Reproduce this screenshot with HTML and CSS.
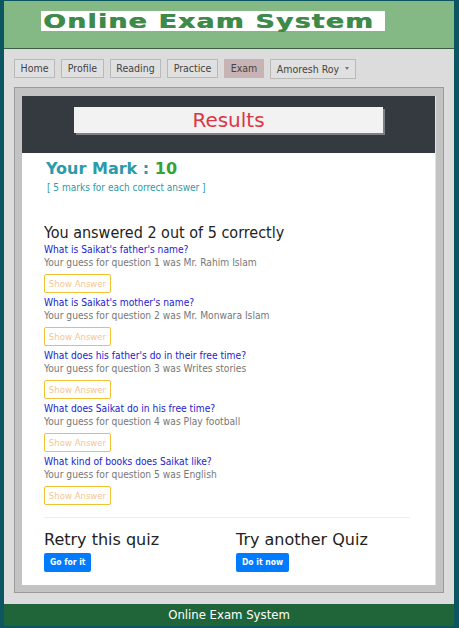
FILE: index.html
```html
<!DOCTYPE html>
<html>
<head>
<meta charset="utf-8">
<link rel="stylesheet" href="styles.css">
</head>
<body>
<div class="page">
  <header class="site-header">
    <div class="logo"><span class="logo-text">Online Exam System</span></div>
  </header>
  <div class="body-area">
    <nav class="nav">
      <span class="nav-btn">Home</span>
      <span class="nav-btn">Profile</span>
      <span class="nav-btn">Reading</span>
      <span class="nav-btn">Practice</span>
      <span class="nav-btn active">Exam</span>
      <span class="nav-btn user">Amoresh Roy <span class="caret"></span></span>
    </nav>
    <div class="panel">
      <div class="panel-inner">
        <div class="results-bar">
          <div class="results-box">Results</div>
        </div>
        <div class="content">
          <div class="mark">Your Mark : <span class="mark-num">10</span></div>
          <div class="mark-note">[ 5 marks for each correct answer ]</div>
          <h2 class="summary">You answered 2 out of 5 correctly</h2>
          <div class="q">
            <div class="q-title">What is Saikat's father's name?</div>
            <div class="q-guess">Your guess for question 1 was Mr. Rahim Islam</div>
            <span class="show-btn">Show Answer</span>
          </div>
          <div class="q">
            <div class="q-title">What is Saikat's mother's name?</div>
            <div class="q-guess">Your guess for question 2 was Mr. Monwara Islam</div>
            <span class="show-btn">Show Answer</span>
          </div>
          <div class="q">
            <div class="q-title">What does his father's do in their free time?</div>
            <div class="q-guess">Your guess for question 3 was Writes stories</div>
            <span class="show-btn">Show Answer</span>
          </div>
          <div class="q">
            <div class="q-title">What does Saikat do in his free time?</div>
            <div class="q-guess">Your guess for question 4 was Play football</div>
            <span class="show-btn">Show Answer</span>
          </div>
          <div class="q">
            <div class="q-title">What kind of books does Saikat like?</div>
            <div class="q-guess">Your guess for question 5 was English</div>
            <span class="show-btn">Show Answer</span>
          </div>
          <hr class="divider">
          <div class="actions">
            <div class="action">
              <div class="action-title">Retry this quiz</div>
              <span class="blue-btn">Go for it</span>
            </div>
            <div class="action">
              <div class="action-title">Try another Quiz</div>
              <span class="blue-btn">Do it now</span>
            </div>
          </div>
        </div>
      </div>
    </div>
  </div>
  <footer class="site-footer">Online Exam System</footer>
</div>
</body>
</html>
```

FILE: styles.css
```css
html, body {
  margin: 0;
  padding: 0;
}
body {
  background: #0b5660;
  font-family: "DejaVu Sans Condensed", "DejaVu Sans", sans-serif;
  height: 628px;
  overflow: hidden;
}
.page {
  width: 450px;
  margin: 1px 0 0 4px;
}
.site-header {
  height: 48px;
  background: #84b986;
  border-bottom: 1px solid #3b5e43;
  padding-top: 10px;
  box-sizing: border-box;
}
.logo {
  margin-left: 37px;
  width: 344px;
  height: 20px;
  background: #fff;
}
.logo-text {
  display: inline-block;
  color: #3d8a4b;
  font-family: "DejaVu Sans", sans-serif;
  font-weight: bold;
  font-size: 20px;
  line-height: 20px;
  letter-spacing: 1px;
  margin-left: 2px;
  transform: scaleX(1.33);
  transform-origin: left center;
  white-space: nowrap;
  text-shadow: 0.6px 0 0 #3d8a4b;
}
.body-area {
  background: #dcdcdc;
  padding: 10px 10px 11px 10px;
}
.nav {
  display: flex;
  gap: 6px;
  height: 20px;
}
.nav-btn {
  background: #e0e0e0;
  border: 1px solid #b9b9b9;
  color: #444;
  font-size: 10.5px;
  line-height: 17px;
  height: 19px;
  box-sizing: border-box;
  text-align: center;
  white-space: nowrap;
}
.nav-btn:nth-child(1) { width: 41px; }
.nav-btn:nth-child(2) { width: 43px; }
.nav-btn:nth-child(3) { width: 51px; }
.nav-btn:nth-child(4) { width: 51px; }
.nav-btn.active {
  background: #c7b3b4;
  border-color: #c7b3b4;
  width: 40px;
}
.nav-btn.user {
  width: 86px;
  height: 20px;
  line-height: 18px;
  display: flex;
  align-items: center;
  justify-content: center;
  gap: 6px;
}
.caret {
  display: inline-block;
  width: 0;
  height: 0;
  border-left: 2.5px solid transparent;
  border-right: 2.5px solid transparent;
  border-top: 3px solid #777;
  margin-top: -1px;
}
.panel {
  margin-top: 8px;
  border: 1px solid #9a9a9a;
  background: #c3c3c3;
  padding: 8px 7px 7px 7px;
}
.panel-inner {
  background: #fff;
  border-right: 1px solid #e2e2e2;
}
.results-bar {
  background: #343a40;
  height: 57px;
  padding-top: 11px;
  box-sizing: border-box;
  display: flex;
  justify-content: center;
}
.results-box {
  width: 309px;
  height: 26px;
  background: #f2f2f2;
  color: #dc3545;
  font-family: "DejaVu Sans", sans-serif;
  font-size: 20px;
  line-height: 26px;
  text-align: center;
  box-shadow: 2px 2px 0 #7d8186;
}
.content {
  padding: 5px 25px 13px 22px;
}
.mark {
  color: #2b9aab;
  font-family: "DejaVu Sans", sans-serif;
  font-weight: bold;
  font-size: 16px;
  line-height: 22px;
  margin-left: 2px;
}
.mark-num {
  color: #33a336;
}
.mark-note {
  color: #2b9aab;
  font-size: 10px;
  line-height: 14px;
  margin-left: 3px;
  margin-top: 1px;
}
.summary {
  margin: 28px 0 0 0;
  font-family: "DejaVu Sans Condensed", "DejaVu Sans", sans-serif;
  font-weight: normal;
  font-size: 16px;
  line-height: 20px;
  color: #222;
}
.q-title {
  color: #1c1ccd;
  font-size: 10.2px;
  line-height: 13px;
}
.q-guess {
  color: #777;
  font-size: 10.2px;
  line-height: 14px;
}
.show-btn {
  display: block;
  margin-top: 4px;
  margin-bottom: 3px;
  width: 67px;
  height: 19px;
  box-sizing: border-box;
  border: 1px solid #f3c233;
  border-radius: 2px;
  color: #f6c58f;
  font-size: 9.5px;
  line-height: 17px;
  text-align: center;
}
.divider {
  border: 0;
  border-top: 1px solid #eee;
  margin: 12px 0 0 0;
}
.actions {
  display: flex;
  margin-top: 12px;
}
.action {
  flex: 0 0 192px;
}
.action-title {
  font-family: "DejaVu Sans", sans-serif;
  font-size: 16px;
  line-height: 20px;
  color: #222;
}
.blue-btn {
  display: inline-block;
  margin-top: 3px;
  background: #007bff;
  color: #fff;
  font-size: 8.5px;
  font-weight: bold;
  height: 19px;
  line-height: 19px;
  padding: 0 6px;
  border-radius: 2px;
}
.site-footer {
  background: #20653a;
  color: #fff;
  text-align: center;
  font-size: 13px;
  height: 22px;
  line-height: 22px;
}
```
